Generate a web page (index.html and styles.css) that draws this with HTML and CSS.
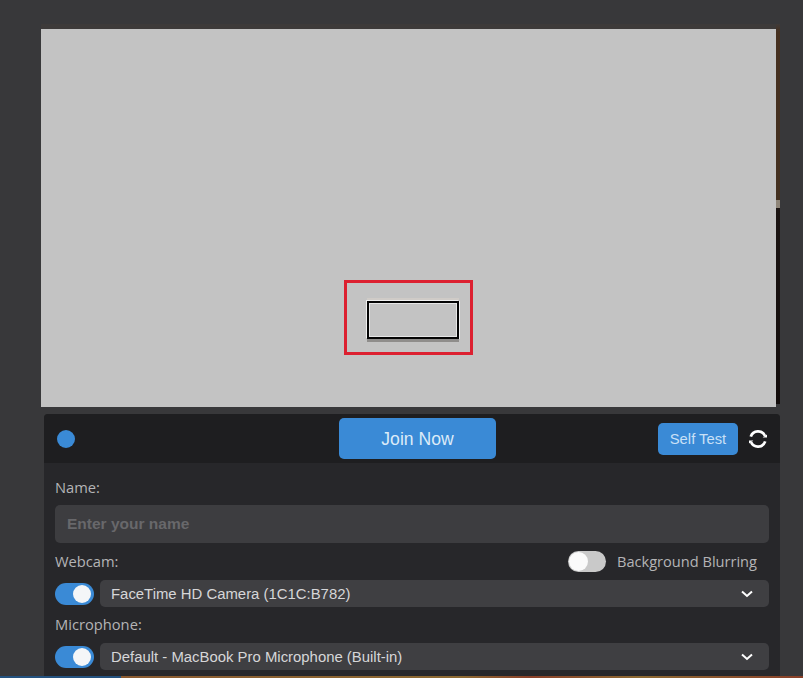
FILE: index.html
```html
<!DOCTYPE html>
<html>
<head>
    <title>Join Room</title>
    <link rel="stylesheet" href="styles.css">
</head>
<body>
    <div class="page">
        <div class="video">
            <div class="cover">
                <div class="highlight">
                    <div class="blank"></div>
                </div>
            </div>
        </div>

        <div class="panel">
            <div class="panel-head">
                <span class="dot"></span>
                <button class="join">Join Now</button>
                <div class="head-right">
                    <button class="selftest">Self Test</button>
                    <svg class="refresh" width="20" height="20" viewBox="0 0 20 20" fill="none">
                        <path d="M2.8 7.6 A7.6 7.6 0 0 1 17 7" stroke="#fff" stroke-width="2.8"/>
                        <path d="M17.2 12.4 A7.6 7.6 0 0 1 3 13" stroke="#fff" stroke-width="2.8"/>
                        <path d="M14.6 8.6 L19 8.6 L19 5.4 Z" fill="#fff"/>
                        <path d="M5.4 11.4 L1 11.4 L1 14.6 Z" fill="#fff"/>
                    </svg>
                </div>
            </div>

            <div class="panel-body">
                <div class="label name-label">Name:</div>
                <div class="name-input">Enter your name</div>

                <div class="row webcam-row">
                    <span class="label">Webcam:</span>
                    <div class="blur">
                        <span class="toggle off"></span>
                        <span class="label">Background Blurring</span>
                    </div>
                </div>
                <div class="row device">
                    <span class="toggle on"></span>
                    <div class="select">
                        <span>FaceTime HD Camera (1C1C:B782)</span>
                        <svg class="chevron" width="12" height="8" viewBox="0 0 12 8" fill="none"><path d="M1 1.5 L6 6 L11 1.5" stroke="#fff" stroke-width="2"/></svg>
                    </div>
                </div>

                <div class="label mic-label">Microphone:</div>
                <div class="row device">
                    <span class="toggle on"></span>
                    <div class="select">
                        <span>Default - MacBook Pro Microphone (Built-in)</span>
                        <svg class="chevron" width="12" height="8" viewBox="0 0 12 8" fill="none"><path d="M1 1.5 L6 6 L11 1.5" stroke="#fff" stroke-width="2"/></svg>
                    </div>
                </div>
            </div>
        </div>

        <div class="strip">
            <div class="strip-blue"></div>
            <div class="strip-orange"></div>
        </div>
    </div>
</body>
</html>
```

FILE: styles.css
```css
* {
    margin: 0;
    padding: 0;
    box-sizing: border-box;
}
html, body {
    height: 100%;
}
body {
    background: #38383a;
    overflow: hidden;
    font-family: "Liberation Sans", Arial, sans-serif;
}
.page {
    height: 678px;
    display: flex;
    flex-direction: column;
}

/* preview, the camera picture only shows along the top and right edge */
.video {
    width: 739px;
    height: 385px;
    margin: 24px 0 0 41px;
    padding: 5px 4px 2px 0;
    background:
        linear-gradient(to bottom, #3f3a38 0, #46301f 8px, #43301f 176px, #8e8578 176px, #8e8578 184px, #1b1412 184px, #120c0b 380px, #38383a 380px) right top / 4px 100% no-repeat,
        linear-gradient(#3d3a39, #3d3a39) left top / 100% 5px no-repeat;
}
.cover {
    height: 378px;
    background: #c3c3c3;
    display: flex;
    justify-content: center;
    align-items: flex-end;
    padding: 0 0 52px 0;
}
.highlight {
    width: 129px;
    height: 75px;
    border: 3px solid #dc2030;
    display: flex;
    align-items: center;
    justify-content: center;
}
.blank {
    width: 92px;
    height: 38px;
    margin: 5px 0 0 9px;
    border: 2px solid #050505;
    box-shadow: inset 0 0 0 1px #e6e6e6, -1px -1px 0 0 #efefef, 1px 0 0 0 #efefef, 0 3px 0 0 #8f8d8b, 0 -3px 0 0 #cfcbc7;
}

/* join panel */
.panel {
    width: 736px;
    height: 262px;
    margin: 5px 0 0 44px;
    background: #27272a;
    border-radius: 4px 4px 0 0;
}
.panel-head {
    height: 49px;
    padding: 0 12px 0 13px;
    background: #1e1e20;
    border-radius: 4px 4px 0 0;
    display: grid;
    grid-template-columns: 282px 157px 1fr;
    align-items: center;
}
.dot {
    width: 18px;
    height: 18px;
    border-radius: 50%;
    background: #3a8ad6;
}
.join {
    height: 41px;
    padding-top: 1px;
    border: 0;
    border-radius: 5px;
    background: #3a8ad6;
    color: #dcebf8;
    font-family: inherit;
    font-size: 17.6px;
}
.head-right {
    display: flex;
    justify-content: flex-end;
    align-items: center;
    gap: 10px;
}
.selftest {
    width: 80px;
    height: 32px;
    border: 0;
    border-radius: 5px;
    background: #3a8ad6;
    color: #c9e0f6;
    font-family: inherit;
    font-size: 14.8px;
}

.panel-body {
    padding: 15px 11px 0 11px;
}
.label {
    color: #b4b4b6;
    font-family: "Open Sans", sans-serif;
    font-size: 14.7px;
    line-height: 18px;
    padding-bottom: 2px;
}
.name-input {
    height: 38px;
    margin-top: 7px;
    padding-left: 12px;
    border-radius: 5px;
    background: #3d3d40;
    color: #68686b;
    font-size: 15.5px;
    font-weight: bold;
    line-height: 38px;
}
.row {
    display: flex;
    align-items: center;
}
.webcam-row {
    justify-content: space-between;
    margin-top: 8px;
    height: 21px;
    padding-right: 12px;
}
.blur {
    display: flex;
    align-items: center;
    gap: 11px;
}
.blur .label {
    font-size: 14.6px;
}
.toggle {
    display: block;
    flex: none;
    width: 39px;
    height: 22px;
    border-radius: 11px;
    background: #3a8ad6;
    position: relative;
}
.toggle::after {
    content: "";
    position: absolute;
    top: 2px;
    right: 3px;
    width: 18px;
    height: 18px;
    border-radius: 50%;
    background: #f4f6f8;
}
.toggle.off {
    width: 38px;
    height: 21px;
    background: #c9c9c9;
}
.toggle.off::after {
    right: auto;
    left: 1px;
    top: 1px;
    width: 19px;
    height: 19px;
    background: #fafafa;
}
.device {
    gap: 6px;
    margin-top: 8px;
}
.select {
    flex: 1;
    height: 27px;
    padding: 0 16px 0 11px;
    border-radius: 5px;
    background: #3f3f42;
    color: #d6d6d8;
    font-size: 14.9px;
    display: flex;
    align-items: center;
    justify-content: space-between;
}
.mic-label {
    margin-top: 8px;
}

/* bottom edge of what sits behind the panel */
.strip {
    display: flex;
    height: 2px;
}
.strip-blue {
    width: 121px;
    background: #24527f;
}
.strip-orange {
    flex: 1;
    background: linear-gradient(to right, #8a5a30 0, #8d6a32 50%, #8a4029 60%, #8d6a32 76%, #8a4029 100%);
}
```
